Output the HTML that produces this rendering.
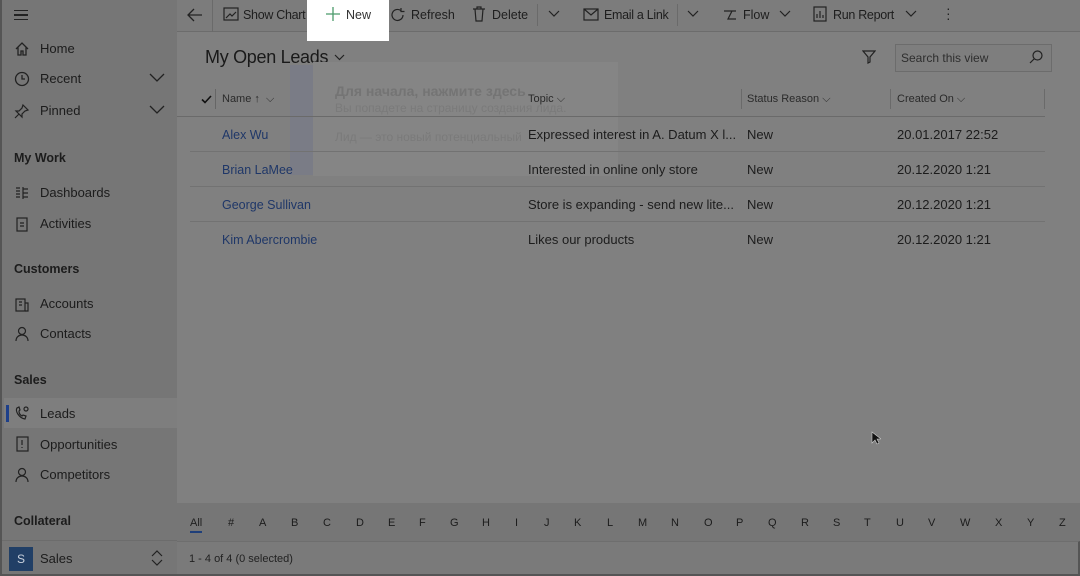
<!DOCTYPE html>
<html><head><meta charset="utf-8"><style>
*{box-sizing:border-box;margin:0;padding:0}
body{width:1080px;height:576px;overflow:hidden;background:#808080;font-family:"Liberation Sans","Noto Sans CJK SC",sans-serif;color:#1c1c1c;position:relative}
.side{position:absolute;left:0;top:0;width:177px;height:576px;background:#767676;border-left:2px solid #555;border-bottom:2px solid #555}
.abs{position:absolute;white-space:nowrap}
.nav{font-size:13px;color:#1c1c1c}
.hdr{font-size:12.5px;font-weight:bold;color:#1c1c1c}
.top{position:absolute;left:177px;top:0;width:903px;height:32px;background:#7c7c7c;border-bottom:1px solid #6c6c6c}
.tb{font-size:12.5px;color:#1e1e1e}
.row{position:absolute;left:190px;width:855px;height:1px;background:#727272}
.cell{font-size:13px;color:#1c1c1c}
.link{font-size:12.5px;color:#1f3768}
.col{font-size:11px;color:#2a2a2a}
.alpha{position:absolute;left:177px;top:503px;width:903px;height:38px;background:#767676}
.foot{position:absolute;left:177px;top:541px;width:903px;height:35px;background:#7a7a7a;border-top:1px solid #6e6e6e;border-bottom:2px solid #555;border-right:2px solid #555}
</style></head><body>
<div class="side">
 <div class="abs" style="left:12px;top:10px;width:14px;height:10px;border-top:1.5px solid #222;border-bottom:1.5px solid #222"><div style="margin-top:3px;height:1.5px;background:#222"></div></div>
 <svg class="abs" style="left:12px;top:41px" width="16" height="16" viewBox="0 0 16 16" fill="none" stroke="#222" stroke-width="1.3"><path d="M2 8L8 2l6 6M4 6.5V14h3v-4h2v4h3V6.5"/></svg>
 <div class="abs nav" style="left:38px;top:41px">Home</div>
 <svg class="abs" style="left:12px;top:71px" width="16" height="16" viewBox="0 0 16 16" fill="none" stroke="#222" stroke-width="1.3"><circle cx="8" cy="8" r="6.5"/><path d="M8 4v4h3"/></svg>
 <div class="abs nav" style="left:38px;top:71px">Recent</div>
 <svg class="abs" style="left:147px;top:73px" width="16" height="10" viewBox="0 0 16 10" fill="none" stroke="#222" stroke-width="1.3"><path d="M1 1l7 7 7-7"/></svg>
 <svg class="abs" style="left:12px;top:103px" width="16" height="16" viewBox="0 0 16 16" fill="none" stroke="#222" stroke-width="1.2"><path d="M9 2l5 5-3 1-3 3 0 3-6-6 3 0 3-3zM5 11l-4 4"/></svg>
 <div class="abs nav" style="left:38px;top:103px">Pinned</div>
 <svg class="abs" style="left:147px;top:105px" width="16" height="10" viewBox="0 0 16 10" fill="none" stroke="#222" stroke-width="1.3"><path d="M1 1l7 7 7-7"/></svg>
 <div class="abs hdr" style="left:12px;top:151px">My Work</div>
 <svg class="abs" style="left:12px;top:185px" width="16" height="16" viewBox="0 0 16 16" fill="none" stroke="#222" stroke-width="1.2"><path d="M2 3h4M2 6h4M2 9h4M2 12h4M9 2v12M9 4h5M9 8h5M9 12h5"/></svg>
 <div class="abs nav" style="left:38px;top:185px">Dashboards</div>
 <svg class="abs" style="left:12px;top:216px" width="16" height="16" viewBox="0 0 16 16" fill="none" stroke="#222" stroke-width="1.2"><rect x="3" y="2" width="10" height="13"/><path d="M6 7h4M6 10h4"/></svg>
 <div class="abs nav" style="left:38px;top:216px">Activities</div>
 <div class="abs hdr" style="left:12px;top:262px">Customers</div>
 <svg class="abs" style="left:12px;top:296px" width="16" height="16" viewBox="0 0 16 16" fill="none" stroke="#222" stroke-width="1.2"><rect x="2" y="3" width="9" height="12"/><path d="M11 7h3v8h-3M5 6h3M5 9h3"/></svg>
 <div class="abs nav" style="left:38px;top:296px">Accounts</div>
 <svg class="abs" style="left:12px;top:326px" width="16" height="16" viewBox="0 0 16 16" fill="none" stroke="#222" stroke-width="1.2"><circle cx="8" cy="5" r="3.5"/><path d="M2 15c0-4 3-6 6-6s6 2 6 6"/></svg>
 <div class="abs nav" style="left:38px;top:326px">Contacts</div>
 <div class="abs hdr" style="left:12px;top:373px">Sales</div>
 <div class="abs" style="left:2px;top:398px;width:173px;height:30px;background:#7e7e7e"></div>
 <div class="abs" style="left:4px;top:405px;width:3px;height:17px;background:#1d3f8a"></div>
 <svg class="abs" style="left:12px;top:405px" width="16" height="16" viewBox="0 0 16 16" fill="none" stroke="#222" stroke-width="1.2"><path d="M3 3c-2 3 2 10 8 11l1-3-3-1-1 1c-2-1-3-3-3-5l1-1-1-3z"/><circle cx="12" cy="4" r="2"/></svg>
 <div class="abs nav" style="left:38px;top:406px">Leads</div>
 <svg class="abs" style="left:14px;top:436px" width="14" height="16" viewBox="0 0 14 16" fill="none" stroke="#222" stroke-width="1.2"><rect x="1" y="1" width="11" height="14"/><path d="M6 4v5M6 11v1"/></svg>
 <div class="abs nav" style="left:38px;top:437px">Opportunities</div>
 <svg class="abs" style="left:12px;top:467px" width="16" height="16" viewBox="0 0 16 16" fill="none" stroke="#222" stroke-width="1.2"><circle cx="8" cy="5" r="3.5"/><path d="M2 15c0-4 3-6 6-6s6 2 6 6"/></svg>
 <div class="abs nav" style="left:38px;top:467px">Competitors</div>
 <div class="abs hdr" style="left:12px;top:514px">Collateral</div>
 <div class="abs" style="left:0;top:540px;width:175px;height:1px;background:#6c6c6c"></div>
 <div class="abs" style="left:7px;top:547px;width:24px;height:24px;background:#213f66;color:#c8d0dc;font-size:12px;text-align:center;line-height:24px">S</div>
 <div class="abs nav" style="left:38px;top:551px">Sales</div>
 <svg class="abs" style="left:149px;top:550px" width="12" height="16" viewBox="0 0 12 16" fill="none" stroke="#222" stroke-width="1.2"><path d="M1 6l5-5 5 5M1 10l5 5 5-5"/></svg>
</div>
<div class="top">
 <svg class="abs" style="left:10px;top:8px" width="16" height="14" viewBox="0 0 16 14" fill="none" stroke="#222" stroke-width="1.3"><path d="M15 7H2M7 1L1 7l6 6"/></svg>
 <div class="abs" style="left:35px;top:0;width:1px;height:32px;background:#6a6a6a"></div>
 <svg class="abs" style="left:46px;top:7px" width="16" height="16" viewBox="0 0 16 16" fill="none" stroke="#222" stroke-width="1.2"><rect x="1" y="1" width="14" height="12"/><path d="M3 11l4-4 2 2 4-4"/></svg>
 <div class="abs tb" style="left:66px;top:8px;letter-spacing:-0.3px">Show Chart</div>
 <div class="abs" style="left:130px;top:0;width:82px;height:41px;background:#fff"></div>
 <svg class="abs" style="left:149px;top:7px" width="14" height="14" viewBox="0 0 14 14" stroke="#4a9a6a" stroke-width="1.3"><path d="M7 0v14M0 7h14"/></svg>
 <div class="abs tb" style="left:169px;top:8px;color:#333">New</div>
 <svg class="abs" style="left:213px;top:7px" width="16" height="16" viewBox="0 0 16 16" fill="none" stroke="#222" stroke-width="1.2"><path d="M13 8a5.5 5.5 0 1 1-2-4.3M11 1v3.5h3.5"/></svg>
 <div class="abs tb" style="left:234px;top:8px">Refresh</div>
 <svg class="abs" style="left:295px;top:6px" width="14" height="16" viewBox="0 0 14 16" fill="none" stroke="#222" stroke-width="1.2"><path d="M1 3h12M5 3V1h4v2M3 3l1 12h6l1-12"/></svg>
 <div class="abs tb" style="left:315px;top:8px">Delete</div>
 <div class="abs" style="left:360px;top:4px;width:1px;height:22px;background:#6a6a6a"></div>
 <svg class="abs" style="left:371px;top:10px" width="12" height="8" viewBox="0 0 12 8" fill="none" stroke="#222" stroke-width="1.2"><path d="M1 1l5 5 5-5"/></svg>
 <svg class="abs" style="left:406px;top:8px" width="16" height="13" viewBox="0 0 16 13" fill="none" stroke="#222" stroke-width="1.2"><rect x="1" y="1" width="14" height="11"/><path d="M1 1l7 6 7-6"/></svg>
 <div class="abs tb" style="left:427px;top:8px;letter-spacing:-0.3px">Email a Link</div>
 <div class="abs" style="left:500px;top:4px;width:1px;height:22px;background:#6a6a6a"></div>
 <svg class="abs" style="left:510px;top:10px" width="12" height="8" viewBox="0 0 12 8" fill="none" stroke="#222" stroke-width="1.2"><path d="M1 1l5 5 5-5"/></svg>
 <svg class="abs" style="left:545px;top:7px" width="16" height="16" viewBox="0 0 16 16" fill="none" stroke="#222" stroke-width="1.2"><path d="M2 4h8l-4 8h8M10 4l4 0"/></svg>
 <div class="abs tb" style="left:566px;top:8px">Flow</div>
 <svg class="abs" style="left:602px;top:10px" width="12" height="8" viewBox="0 0 12 8" fill="none" stroke="#222" stroke-width="1.2"><path d="M1 1l5 5 5-5"/></svg>
 <svg class="abs" style="left:636px;top:6px" width="14" height="16" viewBox="0 0 14 16" fill="none" stroke="#222" stroke-width="1.2"><rect x="1" y="1" width="12" height="14"/><path d="M4 12V8M7 12V5M10 12V9"/></svg>
 <div class="abs tb" style="left:656px;top:8px;letter-spacing:-0.3px">Run Report</div>
 <svg class="abs" style="left:728px;top:10px" width="12" height="8" viewBox="0 0 12 8" fill="none" stroke="#222" stroke-width="1.2"><path d="M1 1l5 5 5-5"/></svg>
 <div class="abs" style="left:769px;top:6px;font-size:14px;line-height:5px;color:#222">·<br>·<br>·</div>
</div>
<div class="abs" style="left:205px;top:47px;font-size:18px;color:#1a1a1a;letter-spacing:-0.3px">My Open Leads</div>
<svg class="abs" style="left:334px;top:54px" width="11" height="7" viewBox="0 0 11 7" fill="none" stroke="#222" stroke-width="1.2"><path d="M1 1l4.5 4.5L10 1"/></svg>
<div class="abs" style="left:290px;top:65px;width:24px;height:110px;background:#7a7c86"></div>
<div class="abs" style="left:313px;top:62px;width:305px;height:114px;background:#858585"></div>
<div class="abs" style="left:335px;top:83px;font-size:14px;font-weight:bold;color:#747474">Для начала, нажмите здесь</div>
<div class="abs" style="left:335px;top:101px;font-size:12px;color:#7a7a7a">Вы попадете на страницу создания лида.</div>
<div class="abs" style="left:335px;top:130px;font-size:12px;color:#7a7a7a">Лид — это новый потенциальный</div>
<svg class="abs" style="left:862px;top:50px" width="14" height="14" viewBox="0 0 14 14" fill="none" stroke="#222" stroke-width="1.2"><path d="M1 1h12L8 7v5l-2 1V7z"/></svg>
<div class="abs" style="left:895px;top:44px;width:157px;height:28px;border:1px solid #6c6c6c;background:#7e7e7e"></div>
<div class="abs" style="left:901px;top:51px;font-size:12px;color:#2e2e2e">Search this view</div>
<svg class="abs" style="left:1029px;top:50px" width="14" height="14" viewBox="0 0 14 14" fill="none" stroke="#222" stroke-width="1.2"><circle cx="8.5" cy="5.5" r="4.5"/><path d="M5 9l-4 4"/></svg>
<svg class="abs" style="left:201px;top:95px" width="11" height="9" viewBox="0 0 11 9" fill="none" stroke="#111" stroke-width="1.6"><path d="M1 4.5l3 3L10 1"/></svg>
<div class="abs" style="left:215px;top:89px;width:1px;height:20px;background:#666"></div>
<div class="abs col" style="left:222px;top:93px">Name ↑ &nbsp;⌵</div>
<div class="abs col" style="left:528px;top:93px">Topic ⌵</div>
<div class="abs" style="left:741px;top:89px;width:1px;height:20px;background:#6a6a6a"></div>
<div class="abs col" style="left:747px;top:93px">Status Reason ⌵</div>
<div class="abs" style="left:890px;top:89px;width:1px;height:20px;background:#6a6a6a"></div>
<div class="abs col" style="left:897px;top:93px">Created On ⌵</div>
<div class="abs" style="left:1044px;top:89px;width:1px;height:20px;background:#6a6a6a"></div>
<div class="row" style="top:116px;background:#6a6a6a;left:177px;width:868px"></div>
<div class="abs link" style="left:222px;top:128px">Alex Wu</div>
<div class="abs cell" style="left:528px;top:127px">Expressed interest in A. Datum X l...</div>
<div class="abs cell" style="left:747px;top:127px">New</div>
<div class="abs cell" style="left:897px;top:127px">20.01.2017 22:52</div>
<div class="row" style="top:151px"></div>
<div class="abs link" style="left:222px;top:163px">Brian LaMee</div>
<div class="abs cell" style="left:528px;top:162px">Interested in online only store</div>
<div class="abs cell" style="left:747px;top:162px">New</div>
<div class="abs cell" style="left:897px;top:162px">20.12.2020 1:21</div>
<div class="row" style="top:186px"></div>
<div class="abs link" style="left:222px;top:198px">George Sullivan</div>
<div class="abs cell" style="left:528px;top:197px">Store is expanding - send new lite...</div>
<div class="abs cell" style="left:747px;top:197px">New</div>
<div class="abs cell" style="left:897px;top:197px">20.12.2020 1:21</div>
<div class="row" style="top:221px"></div>
<div class="abs link" style="left:222px;top:233px">Kim Abercrombie</div>
<div class="abs cell" style="left:528px;top:232px">Likes our products</div>
<div class="abs cell" style="left:747px;top:232px">New</div>
<div class="abs cell" style="left:897px;top:232px">20.12.2020 1:21</div>
<svg class="abs" style="left:871px;top:431px" width="10" height="14" viewBox="0 0 10 14"><path d="M1 1v11l3-3 2 4 2-1-2-4h4z" fill="#111" stroke="#ccc" stroke-width=".6"/></svg>
<div class="alpha">
 <div class="abs" style="left:13px;top:14px;font-size:11px;color:#1e1e1e">All</div>
 <div class="abs" style="left:13px;top:28px;width:12px;height:2px;background:#1f3f7a"></div>
</div>
<div class="foot"><div class="abs" style="left:12px;top:11px;font-size:11px;color:#222">1 - 4 of 4 (0 selected)</div></div>
<div style="position:absolute;left:177px;top:503px;font-size:11px">
<div class="abs" style="left:51px;top:14px">#</div>
<div class="abs" style="left:82px;top:14px">A</div>
<div class="abs" style="left:114px;top:14px">B</div>
<div class="abs" style="left:146px;top:14px">C</div>
<div class="abs" style="left:179px;top:14px">D</div>
<div class="abs" style="left:211px;top:14px">E</div>
<div class="abs" style="left:242px;top:14px">F</div>
<div class="abs" style="left:273px;top:14px">G</div>
<div class="abs" style="left:305px;top:14px">H</div>
<div class="abs" style="left:338px;top:14px">I</div>
<div class="abs" style="left:367px;top:14px">J</div>
<div class="abs" style="left:397px;top:14px">K</div>
<div class="abs" style="left:430px;top:14px">L</div>
<div class="abs" style="left:461px;top:14px">M</div>
<div class="abs" style="left:494px;top:14px">N</div>
<div class="abs" style="left:527px;top:14px">O</div>
<div class="abs" style="left:559px;top:14px">P</div>
<div class="abs" style="left:591px;top:14px">Q</div>
<div class="abs" style="left:624px;top:14px">R</div>
<div class="abs" style="left:656px;top:14px">S</div>
<div class="abs" style="left:687px;top:14px">T</div>
<div class="abs" style="left:719px;top:14px">U</div>
<div class="abs" style="left:751px;top:14px">V</div>
<div class="abs" style="left:783px;top:14px">W</div>
<div class="abs" style="left:818px;top:14px">X</div>
<div class="abs" style="left:850px;top:14px">Y</div>
<div class="abs" style="left:882px;top:14px">Z</div>
</div>
</body></html>
